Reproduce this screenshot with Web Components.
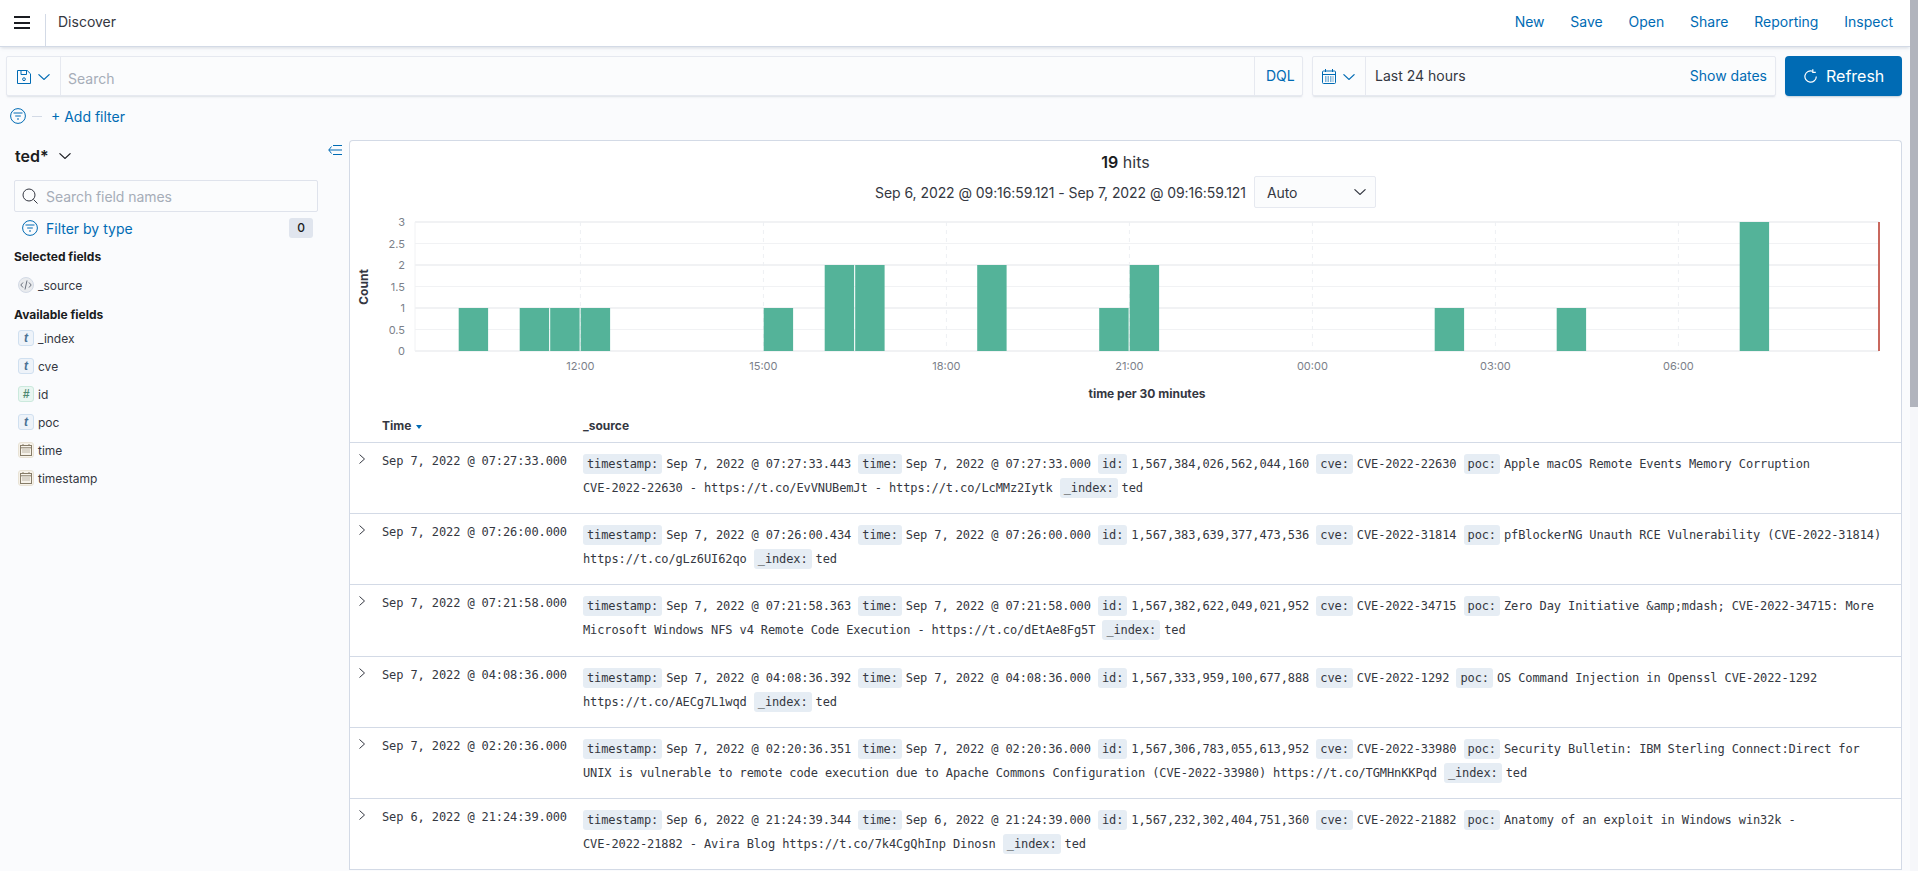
<!DOCTYPE html>
<html lang="en">
<head>
<meta charset="utf-8">
<title>Discover</title>
<style>
    html, body { margin: 0; height: 100%; overflow: hidden; background: #fafbfd; }
    body { font-family: Inter, "Liberation Sans", sans-serif; font-size: 14px; color: #343741; }
</style>
</head>
<body>
<discover-app>
    <app-header title-text="Discover"></app-header>
    <query-bar></query-bar>
    <filter-bar></filter-bar>
    <main-layout>
        <field-sidebar slot="side">
            <field-item type="source" name="_source" slot="selected"></field-item>
            <field-item type="t" name="_index" slot="available"></field-item>
            <field-item type="t" name="cve" slot="available"></field-item>
            <field-item type="num" name="id" slot="available"></field-item>
            <field-item type="t" name="poc" slot="available"></field-item>
            <field-item type="date" name="time" slot="available"></field-item>
            <field-item type="date" name="timestamp" slot="available"></field-item>
        </field-sidebar>
        <results-panel>
            <hits-summary></hits-summary>
            <hits-chart></hits-chart>
            <doc-table>
                <doc-row time="Sep 7, 2022 @ 07:27:33.000">
                    <kv-pair k="timestamp:">Sep 7, 2022 @ 07:27:33.443</kv-pair>
                    <kv-pair k="time:">Sep 7, 2022 @ 07:27:33.000</kv-pair>
                    <kv-pair k="id:">1,567,384,026,562,044,160</kv-pair>
                    <kv-pair k="cve:">CVE-2022-22630</kv-pair>
                    <kv-pair k="poc:">Apple macOS Remote Events Memory Corruption<br>CVE-2022-22630 - https://t.co/EvVNUBemJt - https://t.co/LcMMz2Iytk</kv-pair>
                    <kv-pair k="_index:">ted</kv-pair>
                </doc-row>
                <doc-row time="Sep 7, 2022 @ 07:26:00.000">
                    <kv-pair k="timestamp:">Sep 7, 2022 @ 07:26:00.434</kv-pair>
                    <kv-pair k="time:">Sep 7, 2022 @ 07:26:00.000</kv-pair>
                    <kv-pair k="id:">1,567,383,639,377,473,536</kv-pair>
                    <kv-pair k="cve:">CVE-2022-31814</kv-pair>
                    <kv-pair k="poc:">pfBlockerNG Unauth RCE Vulnerability (CVE-2022-31814)<br>https://t.co/gLz6UI62qo</kv-pair>
                    <kv-pair k="_index:">ted</kv-pair>
                </doc-row>
                <doc-row time="Sep 7, 2022 @ 07:21:58.000">
                    <kv-pair k="timestamp:">Sep 7, 2022 @ 07:21:58.363</kv-pair>
                    <kv-pair k="time:">Sep 7, 2022 @ 07:21:58.000</kv-pair>
                    <kv-pair k="id:">1,567,382,622,049,021,952</kv-pair>
                    <kv-pair k="cve:">CVE-2022-34715</kv-pair>
                    <kv-pair k="poc:">Zero Day Initiative &amp;amp;mdash; CVE-2022-34715: More<br>Microsoft Windows NFS v4 Remote Code Execution - https://t.co/dEtAe8Fg5T</kv-pair>
                    <kv-pair k="_index:">ted</kv-pair>
                </doc-row>
                <doc-row time="Sep 7, 2022 @ 04:08:36.000">
                    <kv-pair k="timestamp:">Sep 7, 2022 @ 04:08:36.392</kv-pair>
                    <kv-pair k="time:">Sep 7, 2022 @ 04:08:36.000</kv-pair>
                    <kv-pair k="id:">1,567,333,959,100,677,888</kv-pair>
                    <kv-pair k="cve:">CVE-2022-1292</kv-pair>
                    <kv-pair k="poc:">OS Command Injection in Openssl CVE-2022-1292<br>https://t.co/AECg7L1wqd</kv-pair>
                    <kv-pair k="_index:">ted</kv-pair>
                </doc-row>
                <doc-row time="Sep 7, 2022 @ 02:20:36.000">
                    <kv-pair k="timestamp:">Sep 7, 2022 @ 02:20:36.351</kv-pair>
                    <kv-pair k="time:">Sep 7, 2022 @ 02:20:36.000</kv-pair>
                    <kv-pair k="id:">1,567,306,783,055,613,952</kv-pair>
                    <kv-pair k="cve:">CVE-2022-33980</kv-pair>
                    <kv-pair k="poc:">Security Bulletin: IBM Sterling Connect:Direct for<br>UNIX is vulnerable to remote code execution due to Apache Commons Configuration (CVE-2022-33980) https://t.co/TGMHnKKPqd</kv-pair>
                    <kv-pair k="_index:">ted</kv-pair>
                </doc-row>
                <doc-row time="Sep 6, 2022 @ 21:24:39.000">
                    <kv-pair k="timestamp:">Sep 6, 2022 @ 21:24:39.344</kv-pair>
                    <kv-pair k="time:">Sep 6, 2022 @ 21:24:39.000</kv-pair>
                    <kv-pair k="id:">1,567,232,302,404,751,360</kv-pair>
                    <kv-pair k="cve:">CVE-2022-21882</kv-pair>
                    <kv-pair k="poc:">Anatomy of an exploit in Windows win32k -<br>CVE-2022-21882 - Avira Blog https://t.co/7k4CgQhInp Dinosn</kv-pair>
                    <kv-pair k="_index:">ted</kv-pair>
                </doc-row>
            </doc-table>
        </results-panel>
    </main-layout>
</discover-app>

<script>
const BLUE = '#006bb4';
const chevron = (color) => `<svg width="12" height="6" viewBox="0 0 12 6" fill="none" stroke="${color}" stroke-width="1.1"><path d="M.5.3 6 5.5 11.5.3"/></svg>`;
const filterIcon = `<svg width="16" height="16" viewBox="0 0 16 16" fill="none" stroke="${BLUE}"><circle cx="8" cy="8" r="7.4"/><path d="M3.5 5h9M5.2 8h5.6M7 11h2"/></svg>`;

class DiscoverApp extends HTMLElement {
    constructor() {
        super();
        this.attachShadow({ mode: 'open' });
        this.shadowRoot.innerHTML = `
            <style>
                :host { display: flex; height: 100vh; }
                .content { flex: 1; min-width: 0; overflow: hidden; }
                .track { width: 8px; background: #f6f7fa; }
                .thumb { height: 407px; background: #b1b4bd; }
            </style>
            <div class="content"><slot></slot></div>
            <div class="track"><div class="thumb"></div></div>
        `;
    }
}

class AppHeader extends HTMLElement {
    constructor() {
        super();
        this.attachShadow({ mode: 'open' });
        const links = ['New', 'Save', 'Open', 'Share', 'Reporting', 'Inspect'];
        this.shadowRoot.innerHTML = `
            <style>
                :host { display: flex; align-items: stretch; height: 46px; background: #fff;
                    border-bottom: 1px solid #d3dae6; box-shadow: 0 2px 3px -1px rgba(152,162,179,.35); position: relative; }
                .burger { width: 45px; display: flex; flex-direction: column; gap: 3.7px; padding: 16px 0 0 14px; box-sizing: border-box; }
                .burger i { display: block; width: 16px; height: 2px; background: #1a1c21; }
                .crumb { margin-top: 14px; height: 32px; border-left: 1px solid #d3dae6; padding-left: 12px; line-height: 16px; }
                .crumb span { display: block; }
                nav { margin-left: auto; display: flex; gap: 25.8px; padding: 14px 17px 0 0; line-height: 16px; color: ${BLUE}; }
            </style>
            <div class="burger"><i></i><i></i><i></i></div>
            <div class="crumb"><span>${this.getAttribute('title-text')}</span></div>
            <nav>${links.map((l) => `<span>${l}</span>`).join('')}</nav>
        `;
    }
}

class QueryBar extends HTMLElement {
    constructor() {
        super();
        this.attachShadow({ mode: 'open' });
        this.shadowRoot.innerHTML = `
            <style>
                :host { display: flex; gap: 9px; padding: 9px 8px 0 6px; height: 40px; }
                svg { display: block; }
                .box { display: flex; align-items: stretch; height: 40px; background: #fbfcfd; box-sizing: border-box;
                    border: 1px solid #e6e9f0; box-shadow: 0 2px 2px -1px rgba(152,162,179,.3); border-radius: 2px; }
                .query { flex: 1; min-width: 0; }
                .date { width: 464px; flex: none; }
                .pre { display: flex; align-items: center; box-sizing: border-box; border-right: 1px solid #e6e9f0; }
                .query .pre { width: 54px; padding: 1px 0 0 10px; gap: 7px; }
                .date .pre { width: 53px; padding: 1px 0 0 9px; gap: 7px; }
                .search { flex: 1; color: #a6adb8; padding: 6px 0 0 7px; line-height: 32px; }
                .dql { width: 36px; border-left: 1px solid #e6e9f0; color: ${BLUE}; line-height: 38px; padding-left: 11px; }
                .range { flex: 1; padding-left: 9px; line-height: 38px; }
                .show { color: ${BLUE}; line-height: 38px; padding-right: 8px; }
                button { flex: none; width: 117px; height: 40px; border: 0; border-radius: 4px; background: ${BLUE}; color: #fff;
                    font: 400 16px Inter, "Liberation Sans", sans-serif; display: flex; align-items: center; gap: 9px; padding: 0 0 0 19px;
                    box-shadow: 0 2px 2px -1px rgba(54,97,126,.3); }
            </style>
            <div class="box query">
                <div class="pre">
                    <svg width="14" height="14" viewBox="0 0 14 14" fill="none" stroke="${BLUE}"><path d="M.5.5h9.7l3.3 3.3v9.7H.5z"/><path d="M4 .5v4h5.5v-4"/><circle cx="7" cy="9.2" r="1.4"/></svg>
                    ${chevron(BLUE)}
                </div>
                <div class="search">Search</div>
                <div class="dql">DQL</div>
            </div>
            <div class="box date">
                <div class="pre">
                    <svg width="14" height="15" viewBox="0 0 14 15" fill="none" stroke="${BLUE}"><rect x=".5" y="2" width="13" height="12.5" rx="1"/><path d="M.5 5.5h13M3.5 0v3M10.5 0v3"/><path stroke-dasharray="1.5 1" d="M3 8h8.5M3 10h8.5M3 12h8.5"/></svg>
                    ${chevron(BLUE)}
                </div>
                <div class="range">Last 24 hours</div>
                <div class="show">Show dates</div>
            </div>
            <button>
                <svg width="13" height="14" viewBox="0 0 13 14" fill="none" stroke="#fff" stroke-width="1.2"><path d="M8.7 2.2A5.7 5.7 0 1 0 12.3 7.5"/><path d="M8.8.2v3.2h3"/></svg>
                <span>Refresh</span>
            </button>
        `;
    }
}

class FilterBar extends HTMLElement {
    constructor() {
        super();
        this.attachShadow({ mode: 'open' });
        this.shadowRoot.innerHTML = `
            <style>
                :host { display: flex; align-items: center; height: 40px; padding-left: 10px; color: ${BLUE}; }
                svg { display: block; }
                .dash { width: 10px; height: 1px; background: #d3dae6; margin: 0 9px 0 6px; }
            </style>
            ${filterIcon}
            <div class="dash"></div>
            <span>+ Add filter</span>
        `;
    }
}

class MainLayout extends HTMLElement {
    constructor() {
        super();
        this.attachShadow({ mode: 'open' });
        this.shadowRoot.innerHTML = `
            <style>
                :host { display: flex; align-items: flex-start; }
                svg { display: block; }
                .side { width: 318px; flex: none; }
                .collapse { width: 31px; flex: none; padding: 9px 0 0 10px; box-sizing: border-box; }
                .main { flex: 1; min-width: 0; margin: 4px 8px 0 0; }
            </style>
            <div class="side"><slot name="side"></slot></div>
            <div class="collapse">
                <svg width="14" height="10" viewBox="0 0 14 10" fill="none" stroke="${BLUE}"><path d="M3.5 1.5.8 5l2.7 3.5M.8 5H14M5 .5h9M5 9.5h9"/></svg>
            </div>
            <div class="main"><slot></slot></div>
        `;
    }
}

class FieldSidebar extends HTMLElement {
    constructor() {
        super();
        this.attachShadow({ mode: 'open' });
        this.shadowRoot.innerHTML = `
            <style>
                :host { display: block; padding: 8px 0 0 14px; }
                svg { display: block; }
                .pattern { display: flex; align-items: center; gap: 10px; height: 24px; font-size: 16px; font-weight: 600; color: #1a1c21; padding-left: 1px; }
                .search { display: flex; align-items: center; gap: 8px; height: 32px; margin-top: 12px; box-sizing: border-box;
                    border: 1px solid #dfe3ec; border-radius: 2px; background: #fbfcfd; padding-left: 7px; color: #a6adb8; letter-spacing: -.06px; }
                .filter { display: flex; align-items: center; gap: 8px; height: 32px; padding: 0 5px 0 8px; color: ${BLUE}; }
                .badge { margin-left: auto; width: 24px; height: 20px; line-height: 20px; text-align: center; border-radius: 3px;
                    background: #e0e5ee; color: #1a1c21; font-size: 12px; font-weight: 500; }
                h3 { margin: 0; font-size: 12px; line-height: 16px; font-weight: 700; color: #1a1c21; }
                .selected { margin-top: 5px; }
                .list-a { margin-top: 6px; }
                .available { margin-top: 8px; }
                .list-b { margin-top: 1px; }
            </style>
            <div class="pattern"><span>ted*</span>${chevron('#1a1c21')}</div>
            <div class="search">
                <svg width="16" height="16" viewBox="0 0 16 16" fill="none" stroke="#343741"><circle cx="7" cy="7" r="6"/><path d="M11.5 11.5l4 4"/></svg>
                <span>Search field names</span>
            </div>
            <div class="filter">${filterIcon}<span>Filter by type</span><span class="badge">0</span></div>
            <h3 class="selected">Selected fields</h3>
            <div class="list-a"><slot name="selected"></slot></div>
            <h3 class="available">Available fields</h3>
            <div class="list-b"><slot name="available"></slot></div>
        `;
    }
}

class FieldItem extends HTMLElement {
    constructor() {
        super();
        this.attachShadow({ mode: 'open' });
        const type = this.getAttribute('type');
        const icons = {
            t: 't',
            num: '#',
            date: `<svg width="12" height="12" viewBox="0 0 12 12" fill="none" stroke="#867c68"><rect x=".5" y="1.5" width="11" height="10"/><path d="M.5 3.8h11M3 0v2M9 0v2"/><path stroke-dasharray="1 1" d="M2.5 6h7M2.5 8h7"/></svg>`,
            source: `<svg width="12" height="10" viewBox="0 0 12 10" fill="none" stroke="#6a717d"><path d="M3 2.5.8 5 3 7.5M9 2.5 11.2 5 9 7.5M7 .5 5 9.5"/></svg>`,
        };
        this.shadowRoot.innerHTML = `
            <style>
                :host { display: flex; align-items: center; gap: 4px; height: 28px; padding-left: 4px; font-size: 12px; color: #343741; }
                .ic { width: 16px; height: 16px; box-sizing: border-box; border: 1px solid; border-radius: 3px; display: flex; align-items: center; justify-content: center;
                    font: italic 700 12px "Liberation Sans", sans-serif; }
                .t { background: #eef3f9; border-color: #d0e0f0; color: #4a7194; }
                .num { background: #e9f6f1; border-color: #cbe9dd; color: #4d8870; }
                .date { background: #f6f2ea; border-color: #e9e3d6; }
                .source { background: #e9ebee; border-color: #d3dae6; border-radius: 50%; }
            </style>
            <span class="ic ${type}">${icons[type]}</span>
            <span>${this.getAttribute('name')}</span>
        `;
    }
}

class ResultsPanel extends HTMLElement {
    constructor() {
        super();
        this.attachShadow({ mode: 'open' });
        this.shadowRoot.innerHTML = `
            <style>
                :host { display: block; background: #fff; border: 1px solid #d3dae6; border-bottom: 0; border-radius: 4px 4px 0 0; }
            </style>
            <slot></slot>
        `;
    }
}

class HitsSummary extends HTMLElement {
    constructor() {
        super();
        this.attachShadow({ mode: 'open' });
        this.shadowRoot.innerHTML = `
            <style>
                :host { display: block; height: 73px; box-sizing: border-box; padding-top: 10px; text-align: center; }
                svg { display: block; }
                .hits { font-size: 16px; line-height: 22px; }
                .hits b { font-weight: 600; color: #1a1c21; }
                .range { display: flex; justify-content: center; align-items: center; gap: 8px; margin-top: 3px; letter-spacing: -.07px; }
                .select { width: 122px; height: 32px; box-sizing: border-box; border: 1px solid #e6e9f0; border-radius: 2px; background: #fbfcfd;
                    display: flex; align-items: center; justify-content: space-between; padding: 0 9px 0 12px; }
            </style>
            <div class="hits"><b>19</b> hits</div>
            <div class="range">
                <span>Sep 6, 2022 @ 09:16:59.121 - Sep 7, 2022 @ 09:16:59.121</span>
                <div class="select"><span>Auto</span>${chevron('#343741')}</div>
            </div>
        `;
    }
}

class HitsChart extends HTMLElement {
    constructor() {
        super();
        this.attachShadow({ mode: 'open' });
        const X0 = 350, Y0 = 214;
        const left = 415 - X0, right = 1879 - X0, top = 222 - Y0, bottom = 351 - Y0;
        const yAt = (v) => bottom - (bottom - top) * v / 3;
        const slot = (k) => 580.4 - X0 + k * 30.5;
        const bars = [[-4, 1], [-2, 1], [-1, 1], [0, 1], [6, 1], [8, 2], [9, 2], [13, 2], [17, 1], [18, 2], [28, 1], [32, 1], [38, 3]];
        const ticks = [[0, '12:00'], [6, '15:00'], [12, '18:00'], [18, '21:00'], [24, '00:00'], [30, '03:00'], [36, '06:00']];
        let s = '';
        [0, 0.5, 1, 1.5, 2, 2.5, 3].forEach((v) => {
            const major = Number.isInteger(v);
            s += `<line x1="${left}" x2="${right}" y1="${yAt(v)}" y2="${yAt(v)}" stroke="#f1f2f4" stroke-width="${major ? 2 : 1}"/>`;
            s += `<text x="${left - 10}" y="${yAt(v) + 4}" text-anchor="end" class="tick">${v}</text>`;
        });
        s += `<line x1="${left}" x2="${left}" y1="${top}" y2="${bottom}" stroke="#f1f2f4"/>`;
        ticks.forEach(([k, label]) => {
            s += `<line x1="${slot(k)}" x2="${slot(k)}" y1="${top}" y2="${bottom}" stroke="#eef0f3" stroke-dasharray="4 4"/>`;
            s += `<text x="${slot(k)}" y="${366 - Y0 + 4}" text-anchor="middle" class="tick">${label}</text>`;
        });
        bars.forEach(([k, v]) => {
            s += `<rect x="${slot(k) + 0.3}" y="${yAt(v)}" width="29.4" height="${bottom - yAt(v)}" fill="#54b399"/>`;
        });
        s += `<rect x="${right - 1}" y="${top}" width="2" height="${bottom - top}" fill="#c9685e"/>`;
        s += `<text transform="translate(${363.5 - X0 + 4} ${287 - Y0}) rotate(-90)" text-anchor="middle" class="axis">Count</text>`;
        s += `<text x="${(left + right) / 2}" y="${394 - Y0 + 4}" text-anchor="middle" class="axis">time per 30 minutes</text>`;
        this.shadowRoot.innerHTML = `
            <style>
                :host { display: block; height: 196px; }
                svg { display: block; }
                .tick { font: 11px Inter, "Liberation Sans", sans-serif; fill: #7b7f8a; }
                .axis { font: 700 12px Inter, "Liberation Sans", sans-serif; fill: #343741; }
            </style>
            <svg width="1551" height="196">${s}</svg>
        `;
    }
}

class DocTable extends HTMLElement {
    constructor() {
        super();
        this.attachShadow({ mode: 'open' });
        this.shadowRoot.innerHTML = `
            <style>
                :host { display: block; }
                .head { display: grid; grid-template-columns: 32px 201px 1fr; height: 33px; box-sizing: border-box; border-bottom: 1px solid #d3dae6;
                    font-size: 12px; font-weight: 700; line-height: 32px; color: #343741; }
                .arrow { display: inline-block; margin-left: 2px; vertical-align: 1px; width: 0; height: 0;
                    border: 3.5px solid transparent; border-top: 4px solid ${BLUE}; border-bottom: 0; }
            </style>
            <div class="head"><span></span><span>Time <i class="arrow"></i></span><span>_source</span></div>
            <slot></slot>
        `;
    }
}

class DocRow extends HTMLElement {
    constructor() {
        super();
        this.attachShadow({ mode: 'open' });
        this.shadowRoot.innerHTML = `
            <style>
                :host { display: grid; grid-template-columns: 32px 201px 1fr; box-sizing: border-box; height: 71.2px; border-bottom: 1px solid #d3dae6;
                    font: 12px/24px "DejaVu Sans Mono", "Liberation Mono", monospace; letter-spacing: -.11px; color: #343741; }
                .toggle { padding: 11px 0 0 9px; }
                svg { display: block; }
                .time { padding-top: 6px; white-space: nowrap; }
                .src { padding: 9px 8px 0 0; }
            </style>
            <div class="toggle"><svg width="6" height="10" viewBox="0 0 6 10" fill="none" stroke="#343741"><path d="M.5.5 5.5 5 .5 9.5"/></svg></div>
            <div class="time">${this.getAttribute('time')}</div>
            <div class="src"><slot></slot></div>
        `;
    }
}

class KvPair extends HTMLElement {
    constructor() {
        super();
        this.attachShadow({ mode: 'open' });
        this.shadowRoot.innerHTML = `
            <style>
                :host { display: inline; }
                .k { display: inline-block; line-height: 20px; padding: 0 4px; margin-right: 4px; background: #e6edf4; border-radius: 3px; }
            </style>
            <span class="k">${this.getAttribute('k')}</span><slot></slot>
        `;
    }
}

customElements.define('discover-app', DiscoverApp);
customElements.define('app-header', AppHeader);
customElements.define('query-bar', QueryBar);
customElements.define('filter-bar', FilterBar);
customElements.define('main-layout', MainLayout);
customElements.define('field-sidebar', FieldSidebar);
customElements.define('field-item', FieldItem);
customElements.define('results-panel', ResultsPanel);
customElements.define('hits-summary', HitsSummary);
customElements.define('hits-chart', HitsChart);
customElements.define('doc-table', DocTable);
customElements.define('doc-row', DocRow);
customElements.define('kv-pair', KvPair);
</script>
</body>
</html>
